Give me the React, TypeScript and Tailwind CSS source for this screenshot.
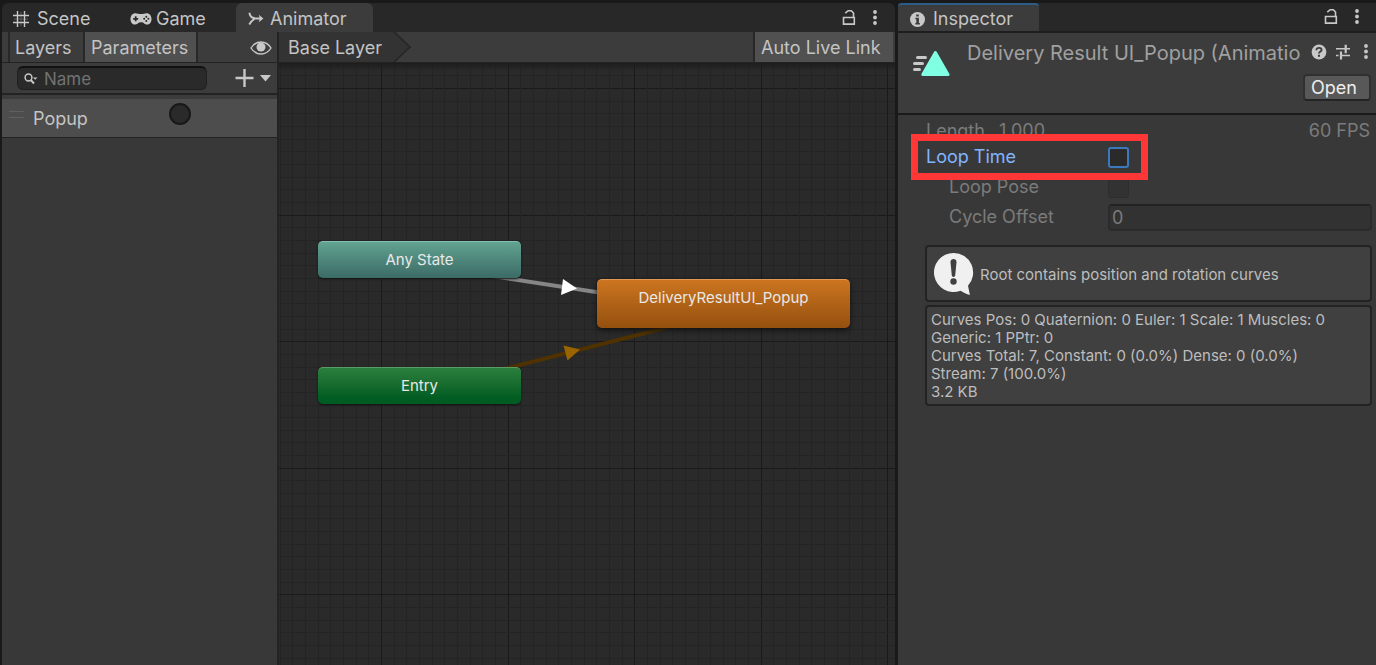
import { useId, type ReactNode } from "react";

const MINOR = 12.66;
const GRID_COUNT = 200;

function LockIcon() {
  return (
    <svg width="14" height="18" viewBox="0 0 14 18" fill="none" stroke="#c8c8c8" strokeWidth="1.6">
      <path d="M1.5 8.500h10.800v6.600H1.500z" />
      <path d="M11.500 8.500V4L9.300 1.700H6.200L3.300 4.200" />
    </svg>
  );
}

function DotsIcon() {
  return (
    <svg width="6" height="18" viewBox="0 0 6 18" fill="#c8c8c8">
      <circle cx="3" cy="3" r="1.9" />
      <circle cx="3" cy="8.500" r="1.9" />
      <circle cx="3" cy="14" r="1.9" />
    </svg>
  );
}

function SceneIcon() {
  return (
    <svg width="16" height="16" viewBox="0 0 16 16" stroke="#c8c8c8" strokeWidth="1.4">
      <path d="M4.5 0v16M11.5 0v16M0 4.5h16M0 11.5h16" />
      <path d="M8 1v14M1 8h14" strokeWidth="0.7" opacity="0.45" />
    </svg>
  );
}

function GameIcon() {
  return (
    <svg width="22" height="14" viewBox="0 0 22 14">
      <path
        d="M5.500 1.200C2.400 1.200 0.500 3.600 0.500 7C0.500 10.400 2.300 12.600 5 12.600C7.300 12.600 8 10.200 11 10.200S14.700 12.600 17 12.600C19.700 12.600 21.500 10.400 21.500 7C21.500 3.600 19.600 1.200 16.500 1.200C14.500 1.200 13.500 2 11 2S7.500 1.200 5.500 1.200Z"
        fill="#c8c8c8"
      />
      <path d="M5.700 4.300v5M3.200 6.800h5" stroke="#282828" strokeWidth="1.7" />
      <g fill="#282828">
        <circle cx="16.300" cy="4.700" r="1" />
        <circle cx="16.300" cy="8.900" r="1" />
        <circle cx="14.200" cy="6.800" r="1" />
        <circle cx="18.400" cy="6.800" r="1" />
      </g>
    </svg>
  );
}

function AnimatorIcon() {
  return (
    <svg width="16" height="14" viewBox="0 0 16 14" fill="none" stroke="#c8c8c8" strokeWidth="1.900">
      <path d="M1.300 0.800C2 4.500 4.500 6.500 8 6.500H13" />
      <path d="M1.300 12.500C2.200 10.500 4 8.600 6.500 6.800" />
      <path d="M10.800 2.800l4.600 3.700-4.600 3.700 1-3.700z" fill="#c8c8c8" stroke="none" />
    </svg>
  );
}

function EyeIcon() {
  return (
    <svg width="22" height="16" viewBox="0 0 22 16" fill="none">
      <path d="M1 9C3.500 5 7 3 11 3s7.500 2 10 6c-2.500 4-6 6-10 6S3.500 13 1 9z" stroke="#c8c8c8" strokeWidth="1.4" />
      <circle cx="11" cy="8" r="4.500" fill="#c8c8c8" />
    </svg>
  );
}

function SearchIcon() {
  return (
    <svg className="shrink-0" width="14" height="12" viewBox="0 0 14 12" fill="none">
      <circle cx="4.500" cy="4.500" r="3.400" stroke="#c8c8c8" strokeWidth="1.500" />
      <path d="M6.800 7L10 10.500" stroke="#c8c8c8" strokeWidth="1.900" />
      <path d="M9 4.500h4.400l-2.200 2.300z" fill="#c8c8c8" />
    </svg>
  );
}

function AddIcon() {
  return (
    <svg width="36" height="18" viewBox="0 0 36 18">
      <path d="M9.500 0v18M0.500 9h18" stroke="#c8c8c8" strokeWidth="2.400" />
      <path d="M25 6h11l-5.500 6.500z" fill="#c8c8c8" />
    </svg>
  );
}

function InfoIcon() {
  return (
    <svg width="15" height="15" viewBox="0 0 15 15">
      <circle cx="7.500" cy="7.500" r="7.500" fill="#c8c8c8" />
      <path d="M6.200 2.400h2.600v2.100H6.200zM5.400 5.800h3.500v5.200h1v1.400H5.300V11h1V7.200h-.9z" fill="#3c3c3c" />
    </svg>
  );
}

function ClipIcon() {
  return (
    <svg width="38" height="28" viewBox="0 0 38 28">
      <g stroke="#c8c8c8" strokeWidth="3" strokeLinecap="round">
        <path d="M5.500 8.500h8M2.500 14.500h8M2.500 20.500h5" />
      </g>
      <path d="M23.400 3.500L36 25.500H10.800Z" fill="#80ffe2" stroke="#80ffe2" strokeWidth="3" strokeLinejoin="round" />
    </svg>
  );
}

function HelpIcon() {
  return (
    <svg width="16" height="16" viewBox="0 0 16 16">
      <circle cx="8" cy="8" r="7.400" fill="#c8c8c8" />
      <path d="M5.400 6.300C5.400 4.600 6.500 3.800 8 3.800S10.600 4.700 10.600 6C10.600 7.500 8 7.600 8 9.600" fill="none" stroke="#3c3c3c" strokeWidth="1.800" />
      <path d="M7 10.800h2v2H7z" fill="#3c3c3c" />
    </svg>
  );
}

function PresetIcon() {
  return (
    <svg width="16" height="16" viewBox="0 0 16 16" stroke="#c8c8c8">
      <path d="M1 4.800h9M11.500 4.800H15M1 11.500h2.500M6 11.500h9" strokeWidth="1.400" />
      <path d="M10.700 0.800v8.400M6 7.500v8" strokeWidth="2.200" />
    </svg>
  );
}

function NoticeIcon() {
  return (
    <svg width="40" height="42" viewBox="0 0 40 42">
      <path
        d="M19.500 0A19.500 19.500 0 1 0 26.500 37.700C29.500 39.500 32.500 41.300 35.900 42L34 32.700A19.500 19.500 0 0 0 19.500 0Z"
        fill="#f0f0f0"
      />
      <path d="M16.500 9.200C16.300 5 22.700 5 22.500 9.200L21.200 22.500C21 24.400 18 24.400 17.800 22.500Z" fill="#404040" />
      <circle cx="19.500" cy="28.500" r="3.200" fill="#404040" />
    </svg>
  );
}

function Grid() {
  const lines: ReactNode[] = [];
  for (let i = -8; i < GRID_COUNT; i++) {
    const major = i % 10 === 0;
    const color = major ? "#1a1a1a" : "#242424";
    const x = Math.round(102 + i * MINOR);
    const y = Math.round(25 + i * MINOR);
    lines.push(
      <rect key={`x${i}`} x={x} y="0" width="1" height="100%" fill={color} />,
      <rect key={`y${i}`} x="0" y={y} width="100%" height="1" fill={color} />,
    );
  }
  return (
    <svg className="absolute inset-0 h-full w-full" aria-hidden="true">
      {lines}
    </svg>
  );
}

function Transitions() {
  return (
    <svg className="absolute inset-0 h-full w-full" aria-hidden="true">
      <path d="M200 211L330 231" stroke="#868686" strokeWidth="4" />
      <path d="M284 216L298 225.500L282 232Z" fill="#fff" />
      <path d="M225 306L390 264" stroke="#4f3200" strokeWidth="4" />
      <path d="M284.500 282.500L301 286.500L288.500 297.500Z" fill="#9a6400" />
    </svg>
  );
}

function Tab({ icon, label, className }: { icon: ReactNode; label: string; className: string }) {
  return (
    <button type="button" role="tab" className={`flex shrink-0 items-center pt-0.5 ${className}`}>
      {icon}
      <span>{label}</span>
    </button>
  );
}

function ParametersPanel() {
  return (
    <aside className="flex w-[277px] shrink-0 flex-col border-r-2 border-[#232323] bg-[#383838]">
      <div className="flex h-[31px] items-stretch border-b border-[#232323] bg-[#3c3c3c]">
        <button type="button" className="ml-1.5 w-[77px] border-x-2 border-[#282828] pt-0.5 pl-[5px] text-left">
          Layers
        </button>
        <button type="button" className="w-[113px] border-r-2 border-[#282828] bg-[#505050] pt-0.5 pl-1.5 text-left">
          Parameters
        </button>
        <button type="button" aria-label="Preview" className="mr-[5px] ml-auto">
          <EyeIcon />
        </button>
      </div>
      <div className="flex h-8 items-center border-b-2 border-[#232323] bg-[#3c3c3c] pr-1.5 pl-[15px]">
        <label className="flex h-6 w-[190px] items-center gap-1.5 rounded-md border border-t-2 border-[#202020] border-t-[#111] bg-[#2a2a2a] pl-1.5">
          <SearchIcon />
          <input
            aria-label="Name"
            placeholder="Name"
            className="w-full min-w-0 bg-transparent text-[17px] outline-none placeholder:text-[#727272]"
          />
        </label>
        <button type="button" aria-label="Add parameter" className="ml-auto">
          <AddIcon />
        </button>
      </div>
      <div className="h-1 bg-[#3c3c3c]" />
      <div className="flex h-[39px] items-center border-b border-[#232323] bg-[#4d4d4d] pl-[7px]">
        <span className="mb-2 h-[7px] w-[15px] border-y border-[#606060]" />
        <span className="ml-[9px] w-[136px] pt-0.5">Popup</span>
        <input
          type="radio"
          aria-label="Popup trigger"
          className="mb-2 size-[22px] appearance-none rounded-full border-2 border-[#181818] bg-[#2a2a2a]"
        />
      </div>
    </aside>
  );
}

function Graph() {
  return (
    <section className="flex min-w-0 flex-1 flex-col">
      <div className="flex h-[31px] items-stretch border-b border-[#232323] bg-[#3c3c3c]">
        <button type="button" className="w-[107px] bg-[#333] pt-0.5 pl-[9px] text-left">
          Base Layer
        </button>
        <svg width="26" height="30" viewBox="0 0 26 30">
          <path d="M0 0H8L24 15L8 30H0Z" fill="#333" />
          <path d="M8 0L24 15L8 30" fill="none" stroke="#262626" strokeWidth="1.600" />
        </svg>
        <button type="button" className="mr-[2px] ml-auto w-[140px] border-l-2 border-[#282828] bg-[#505050] pt-0.5 pl-1.5 text-left">
          Auto Live Link
        </button>
      </div>
      <div className="relative flex-1 overflow-hidden bg-[#2a2a2a] text-[15px] text-[#e8e8e8]">
        <Grid />
        <div className="absolute inset-x-0 top-0 h-2 bg-linear-to-b from-[#1d1d1d] to-transparent" />
        <Transitions />
        <div className="absolute top-[178px] left-[39px] flex h-[37px] w-[203px] items-center justify-center rounded-[5px] border-t border-[#83bfae] bg-linear-to-b from-[#62a391] to-[#3b6b66] shadow-[0_1px_2px_#111]">
          Any State
        </div>
        <div className="absolute top-[304px] left-[39px] flex h-[37px] w-[203px] items-center justify-center rounded-[5px] border-t border-[#5a9c67] bg-linear-to-b from-[#2b7f3d] to-[#005c22] to-85% shadow-[0_1px_2px_#111]">
          Entry
        </div>
        <div className="absolute top-[216px] left-[318px] flex h-[49px] w-[253px] items-start justify-center rounded-[5px] border-t border-[#e09a55] bg-linear-to-b from-[#cc7520] to-[#95500e] pt-1.5 shadow-[0_2px_5px_#111]">
          DeliveryResultUI_Popup
        </div>
      </div>
    </section>
  );
}

function Inspector() {
  const id = useId();
  return (
    <aside className="flex w-[478px] shrink-0 flex-col bg-[#383838]">
      <div role="tablist" className="flex h-[30px] items-stretch border-b-2 border-[#1e1e1e] bg-[#282828]">
        <Tab
          icon={<InfoIcon />}
          label="Inspector"
          className="w-[141px] gap-2 rounded-t-sm border-t-2 border-[#2c5d87] bg-[#3c3c3c] pl-3"
        />
        <div className="mr-4 ml-auto flex items-center gap-4">
          <button type="button" aria-label="Lock inspector"><LockIcon /></button>
          <button type="button" aria-label="Inspector menu"><DotsIcon /></button>
        </div>
      </div>
      <header className="flex h-[82px] items-start border-b-2 border-[#1a1a1a] bg-[#3c3c3c] pl-3.5">
        <div className="pt-4"><ClipIcon /></div>
        <div className="flex min-w-0 flex-1 flex-col">
          <div className="mt-2 flex h-6 items-center pl-[17px]">
            <h1 className="min-w-0 flex-1 overflow-hidden text-[20px] whitespace-nowrap text-[#a0a0a0]">
              Delivery Result UI_Popup (Animation Clip)
            </h1>
            <div className="mr-[7px] ml-2.5 flex items-center gap-2 pb-0.5">
              <button type="button" aria-label="Help"><HelpIcon /></button>
              <button type="button" aria-label="Presets"><PresetIcon /></button>
              <button type="button" aria-label="More options" className="ml-1"><DotsIcon /></button>
            </div>
          </div>
          <button
            type="button"
            className="mt-[9px] mr-[5px] h-[27px] w-[68px] self-end rounded border-2 border-[#303030] border-b-[#242424] bg-[#585858] pl-1.5 text-left text-[#eee]"
          >
            Open
          </button>
        </div>
      </header>
      <div className="flex flex-col pr-1 pl-7 text-[#7b7b7b]">
        <div className="flex h-[27px] items-center justify-between pt-1 pr-0.5">
          <span className="flex gap-3.5">
            <span>Length</span>
            <span>1.000</span>
          </span>
          <span>60 FPS</span>
        </div>
        <div className="relative flex h-[30px] items-center">
          <div className="absolute -top-2 -left-[15px] h-[46px] w-[237px] border-[7px] border-[#ff3737] bg-[#383838]" />
          <label htmlFor={`${id}-time`} className="relative w-[182px] text-[#81b4ff]">Loop Time</label>
          <input
            id={`${id}-time`}
            type="checkbox"
            className="relative size-[21px] appearance-none rounded-[3px] border-2 border-[#3a79bb] bg-[#2a2a2a]"
          />
        </div>
        <div className="flex h-[30px] items-center">
          <label htmlFor={`${id}-pose`} className="w-[182px] pl-[23px]">Loop Pose</label>
          <input
            id={`${id}-pose`}
            type="checkbox"
            disabled
            className="size-[21px] appearance-none rounded-[3px] border border-[#2d2d2d] bg-[#323232]"
          />
        </div>
        <div className="flex h-[30px] items-center">
          <label htmlFor={`${id}-offset`} className="w-[182px] shrink-0 pl-[23px]">Cycle Offset</label>
          <input
            id={`${id}-offset`}
            disabled
            defaultValue="0"
            className="h-[27px] min-w-0 flex-1 rounded-[4px] border-2 border-[#2b2b2b] border-t-[#222] bg-[#323232] pl-0.5"
          />
        </div>
        <div className="mt-[13px] -ml-px flex h-[57px] items-center gap-1.5 rounded-[4px] border-2 border-[#232323] bg-[#404040] pl-[7px] text-[15px] text-[#bdbdbd]">
          <NoticeIcon />
          <span className="pt-0.5">Root contains position and rotation curves</span>
        </div>
        <div className="mt-[3px] -ml-px rounded-[4px] border-2 border-[#232323] bg-[#404040] px-1 pt-1 pb-[3px] text-[15px] leading-[18px] text-[#bdbdbd]">
          <p>Curves Pos: 0 Quaternion: 0 Euler: 1 Scale: 1 Muscles: 0</p>
          <p>Generic: 1 PPtr: 0</p>
          <p>Curves Total: 7, Constant: 0 (0.0%) Dense: 0 (0.0%)</p>
          <p>Stream: 7 (100.0%)</p>
          <p>3.2 KB</p>
        </div>
      </div>
    </aside>
  );
}

export default function App() {
  return (
    <div className="flex min-h-screen bg-[#191919] pt-[3px] pl-[2px] font-['Inter',sans-serif] text-[18px] leading-6 text-[#c4c4c4]">
      <main className="mr-[3px] flex min-w-0 flex-1 flex-col">
        <div role="tablist" className="flex h-[29px] items-stretch rounded-t-md bg-[#282828]">
          <Tab icon={<SceneIcon />} label="Scene" className="w-[117px] gap-2 pl-[11px]" />
          <Tab icon={<GameIcon />} label="Game" className="w-[117px] gap-1 pl-[11px]" />
          <Tab icon={<AnimatorIcon />} label="Animator" className="w-[137px] gap-1.5 rounded-t-md bg-[#3c3c3c] pl-3" />
          <div className="mr-[17px] ml-auto flex items-center gap-4">
            <button type="button" aria-label="Lock animator"><LockIcon /></button>
            <button type="button" aria-label="Animator menu"><DotsIcon /></button>
          </div>
        </div>
        <div className="flex flex-1">
          <ParametersPanel />
          <Graph />
        </div>
      </main>
      <Inspector />
    </div>
  );
}
